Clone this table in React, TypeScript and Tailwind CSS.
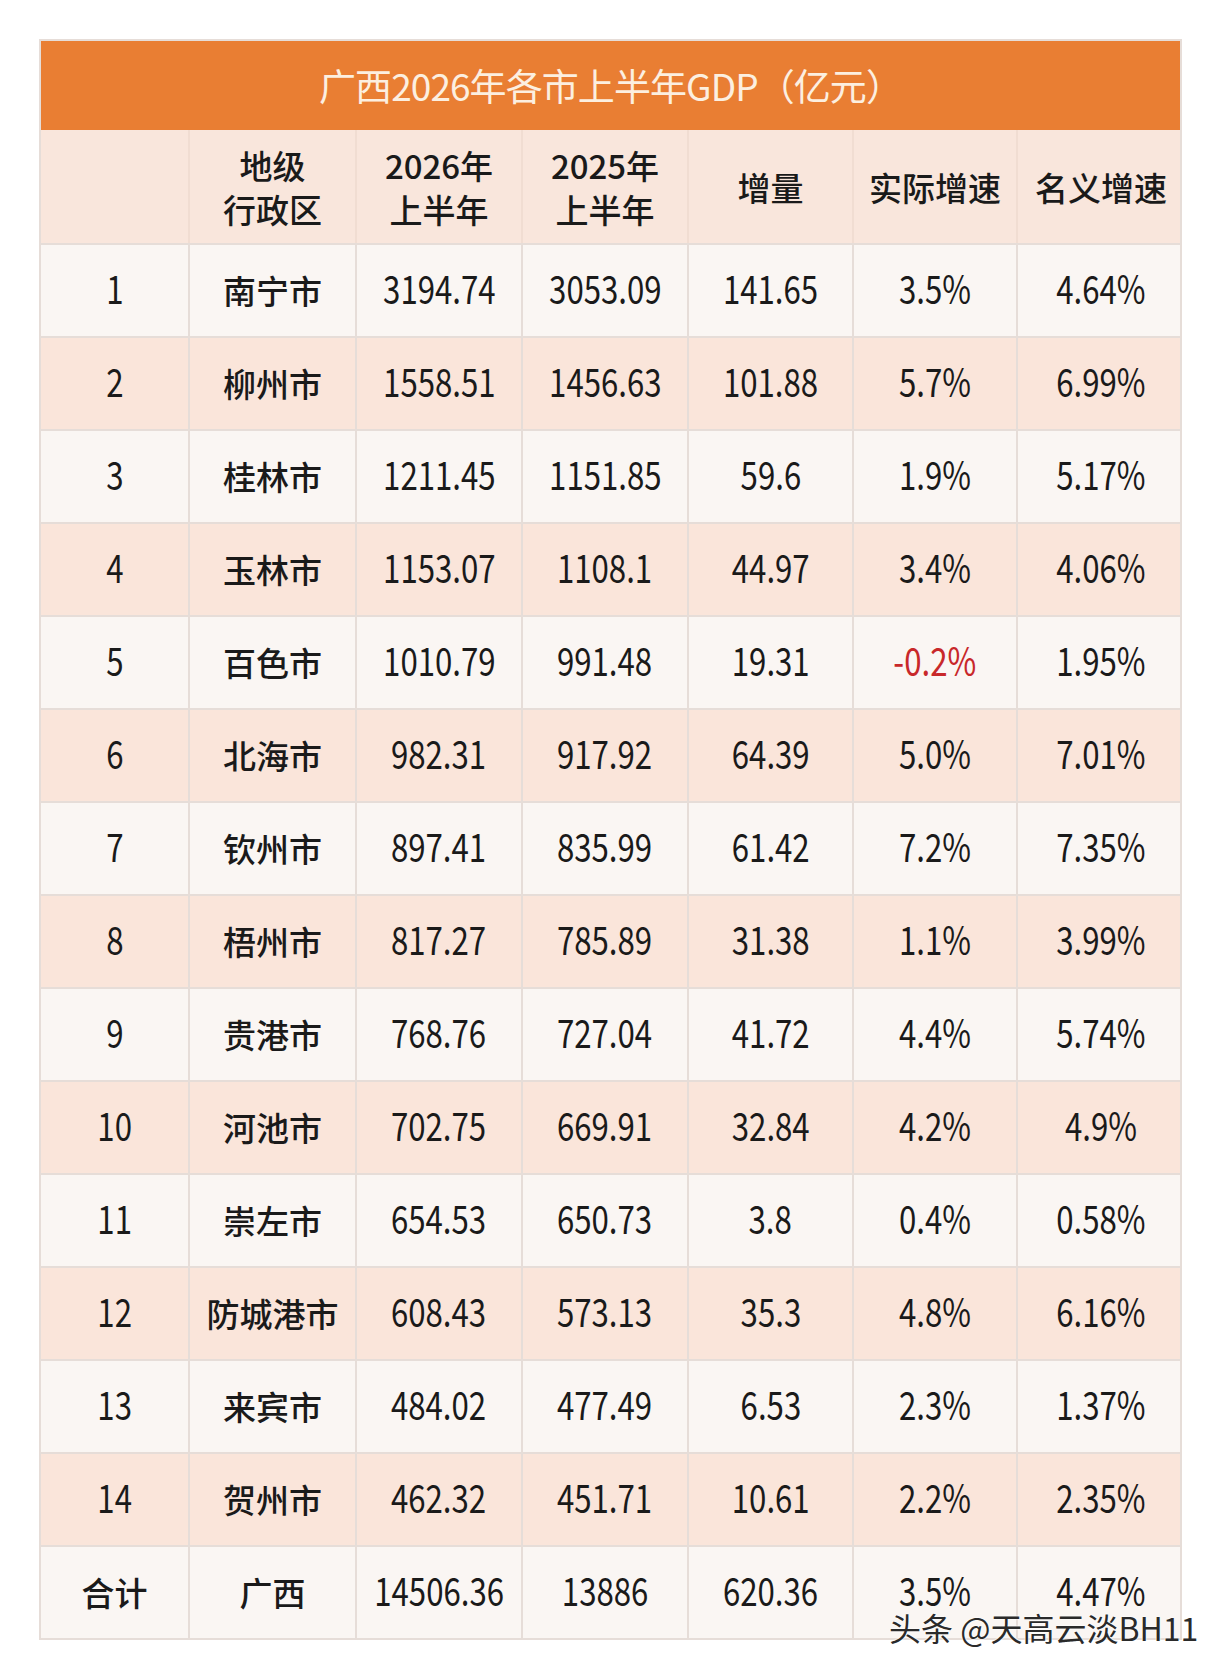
const rows = [
  ['1', '南宁市', '3194.74', '3053.09', '141.65', '3.5%', '4.64%'],
  ['2', '柳州市', '1558.51', '1456.63', '101.88', '5.7%', '6.99%'],
  ['3', '桂林市', '1211.45', '1151.85', '59.6', '1.9%', '5.17%'],
  ['4', '玉林市', '1153.07', '1108.1', '44.97', '3.4%', '4.06%'],
  ['5', '百色市', '1010.79', '991.48', '19.31', '-0.2%', '1.95%'],
  ['6', '北海市', '982.31', '917.92', '64.39', '5.0%', '7.01%'],
  ['7', '钦州市', '897.41', '835.99', '61.42', '7.2%', '7.35%'],
  ['8', '梧州市', '817.27', '785.89', '31.38', '1.1%', '3.99%'],
  ['9', '贵港市', '768.76', '727.04', '41.72', '4.4%', '5.74%'],
  ['10', '河池市', '702.75', '669.91', '32.84', '4.2%', '4.9%'],
  ['11', '崇左市', '654.53', '650.73', '3.8', '0.4%', '0.58%'],
  ['12', '防城港市', '608.43', '573.13', '35.3', '4.8%', '6.16%'],
  ['13', '来宾市', '484.02', '477.49', '6.53', '2.3%', '1.37%'],
  ['14', '贺州市', '462.32', '451.71', '10.61', '2.2%', '2.35%'],
  ['合计', '广西', '14506.36', '13886', '620.36', '3.5%', '4.47%'],
]

const cols = 'grid grid-cols-[149px_167px_166px_166px_165px_164px_166px]'
const cjk = { fontFamily: '"Noto Sans CJK SC", sans-serif' }

export default function App() {
  return (
    <div className="relative w-[1222px] h-[1678px] bg-white pt-[39px] pl-[39px]" style={cjk}>
      <div className="w-[1143px] border-2 border-[#e6ddd8]">
        <div className="h-[89px] bg-[#e97e33] flex items-center justify-center text-[37px] text-[#fcefe0] tracking-tight">
          广西2026年各市上半年GDP（亿元）
        </div>

        <div className={`${cols} h-[113px] bg-[#f9e6dc] text-[33px] font-medium text-[#1a1a1a] leading-[44px]`}>
          <div className="border-r-2 border-[#f1ddd2]" />
          <div className="border-r-2 border-[#f1ddd2] flex flex-col items-center justify-center"><span>地级</span><span>行政区</span></div>
          <div className="border-r-2 border-[#f1ddd2] flex flex-col items-center justify-center"><span>2026年</span><span>上半年</span></div>
          <div className="border-r-2 border-[#f1ddd2] flex flex-col items-center justify-center"><span>2025年</span><span>上半年</span></div>
          <div className="border-r-2 border-[#f1ddd2] flex items-center justify-center">增量</div>
          <div className="border-r-2 border-[#f1ddd2] flex items-center justify-center">实际增速</div>
          <div className="flex items-center justify-center">名义增速</div>
        </div>

        {rows.map((r, i) => (
          <div key={i} className={`${cols} h-[93px] border-t-2 border-[#e6ddd8] text-[#1a1a1a] ${i % 2 === 1 ? 'bg-[#fae5da]' : 'bg-[#faf6f3]'}`}>
            {r.map((c, j) => {
              const text = j === 1 || (j === 0 && i === 14)
              return (
                <div
                  key={j}
                  className={`flex items-center justify-center ${j < 6 ? 'border-r-2 border-[#e6ddd8]' : ''} ${c.startsWith('-') ? 'text-[#c8282a]' : ''}`}
                >
                  {text ? (
                    <span className="text-[33px] font-medium">{c}</span>
                  ) : (
                    <span className="inline-block text-[39px] leading-none scale-x-[0.8] -translate-y-[3px] whitespace-nowrap">{c}</span>
                  )}
                </div>
              )
            })}
          </div>
        ))}
      </div>

      <div
        className="absolute left-[889px] top-[1603px] text-[32px] text-[#2a2a2a] whitespace-nowrap"
        style={{ textShadow: '0 0 2px #fff, 0 0 2px #fff' }}
      >
        头条 @天高云淡BH11
      </div>
    </div>
  )
}
